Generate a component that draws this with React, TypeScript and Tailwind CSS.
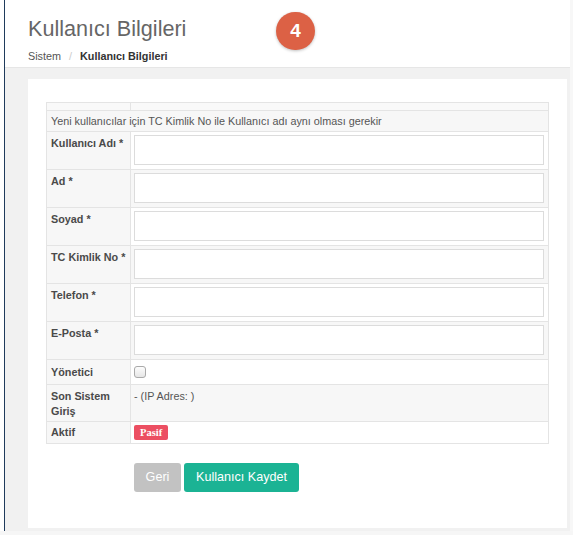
import React from 'react'

const fields = ['Kullanıcı Adı *', 'Ad *', 'Soyad *', 'TC Kimlik No *', 'Telefon *', 'E-Posta *']

const App = () => {
  return (
    <div className="h-[535px] w-[573px] bg-[#f6f6f6] font-['Liberation_Sans',Arial,sans-serif]">
      <div className="flex h-[531px]">
        <div className="w-[4px] bg-white" />
        <div className="relative flex flex-1 flex-col border-l border-[#1f3b5c] border-r-[3px] border-r-[#f7f7f7] bg-[#f1f1f1]">
          {/* header */}
          <div className="h-[68px] border-b border-[#e6e6e6] bg-white pl-[23px] pt-[18px]">
            <h1 className="text-[21.6px] leading-[22px] text-[#666]">Kullanıcı Bilgileri</h1>
            <div className="mt-[8px] flex items-center text-[10.8px] leading-[16px]">
              <span className="text-[#555]">Sistem</span>
              <span className="mx-[8px] text-[#ccc]">/</span>
              <span className="font-bold text-[#333]">Kullanıcı Bilgileri</span>
            </div>
          </div>
          <div className="absolute left-[271px] top-[12px] flex h-[38px] w-[39px] items-center justify-center rounded-full bg-[#dc6145] text-[19px] font-bold text-white shadow-[0_1px_3px_rgba(0,0,0,0.25)]">
            4
          </div>

          {/* panel */}
          <div className="ml-[23px] mr-[3px] mt-[11px] h-[449px] bg-white pl-[18px] pt-[23px]">
            <table className="w-[503px] border-collapse border border-[#e4e4e4] text-[10.8px]">
              <tbody>
                <tr className="h-[8px]">
                  <td className="w-[84px] border border-[#e4e4e4] bg-[#f9f9f9] p-0" />
                  <td className="border border-[#e4e4e4] bg-[#f9f9f9] p-0" />
                </tr>
                <tr className="h-[21px] bg-[#f7f7f7]">
                  <td colSpan={2} className="border border-[#e4e4e4] px-[4px] py-0 text-[#555]">
                    Yeni kullanıcılar için TC Kimlik No ile Kullanıcı adı aynı olması gerekir
                  </td>
                </tr>
                {fields.map((f, i) => (
                  <tr key={f} className={'h-[38px] ' + (i % 2 === 1 ? 'bg-[#f7f7f7]' : 'bg-white')}>
                    <td className="border border-[#e4e4e4] bg-[#f7f7f7] px-[4px] pt-[3px] align-top font-bold text-[#4a4a4a]">{f}</td>
                    <td className="border border-[#e4e4e4] px-[3px] py-[3px] align-top">
                      <input className="block h-[30px] w-[410px] border border-[#dcdcdc] bg-white px-2 outline-none" />
                    </td>
                  </tr>
                ))}
                <tr className="h-[25px] bg-white">
                  <td className="border border-[#e4e4e4] bg-[#f7f7f7] px-[4px] align-middle font-bold text-[#4a4a4a]">Yönetici</td>
                  <td className="border border-[#e4e4e4] px-[3px] align-middle">
                    <div className="h-[12px] w-[12px] rounded-[3px] border border-[#aaa] bg-gradient-to-b from-[#fdfdfd] to-[#e6e6e6]" />
                  </td>
                </tr>
                <tr className="h-[37px] bg-[#f7f7f7]">
                  <td className="border border-[#e4e4e4] px-[4px] pt-[4px] align-top font-bold leading-[15px] text-[#4a4a4a]">
                    Son Sistem Giriş
                  </td>
                  <td className="border border-[#e4e4e4] px-[3px] pt-[4px] align-top leading-[15px] text-[#555]">- (IP Adres: )</td>
                </tr>
                <tr className="h-[22px] bg-white">
                  <td className="border border-[#e4e4e4] bg-[#f7f7f7] px-[4px] align-middle font-bold text-[#4a4a4a]">Aktif</td>
                  <td className="border border-[#e4e4e4] px-[3px] align-middle">
                    <span className="inline-block rounded-[2px] bg-[#ec4f62] px-[6px] font-['Liberation_Serif',serif] text-[10.5px] font-bold leading-[15px] text-white">
                      Pasif
                    </span>
                  </td>
                </tr>
              </tbody>
            </table>

            <div className="ml-[88px] mt-[19px] flex gap-[3px]">
              <button className="h-[29px] w-[47px] rounded-[3px] bg-[#c2c2c2] text-[12.6px] text-white">Geri</button>
              <button className="h-[29px] w-[115px] rounded-[3px] bg-[#1bb394] text-[12.6px] text-white">Kullanıcı Kaydet</button>
            </div>
          </div>
        </div>
      </div>
    </div>
  )
}

export default App
